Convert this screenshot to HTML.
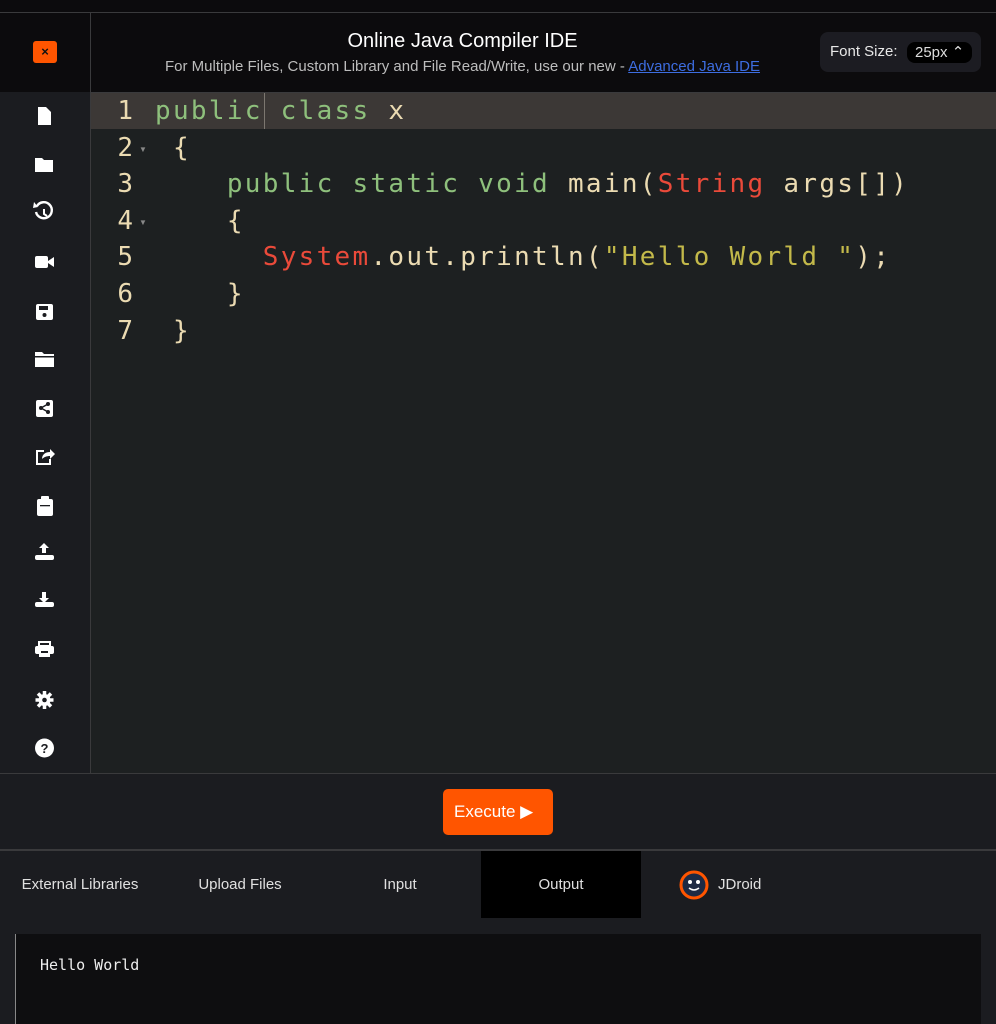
<!DOCTYPE html>
<html><head><meta charset="utf-8"><style>
*{margin:0;padding:0;box-sizing:border-box}
body{width:996px;height:1024px;background:#1b1c20;overflow:hidden;font-family:"Liberation Sans",sans-serif;position:relative}
.top{position:absolute;left:0;top:0;width:996px;height:13px;background:#0c0b0d;border-bottom:1px solid #3a3a3c}
.hdr{position:absolute;left:0;top:13px;width:996px;height:79px;background:#0c0b0d}
.side{position:absolute;left:0;top:13px;width:91px;height:760px;border-right:1px solid #3a3a3c}
.sideb{position:absolute;left:0;top:92px;width:90px;height:681px;background:#1b1c20}
.xbtn{position:absolute;left:33px;top:41px;width:24px;height:22px;background:#ff5500;border-radius:3px;color:#111;font-size:13px;font-weight:bold;text-align:center;line-height:22px}
.title{position:absolute;left:91px;width:743px;top:30px;text-align:center;color:#fff;font-size:20px}
.sub{position:absolute;left:91px;width:743px;top:58px;text-align:center;color:#bdbdbd;font-size:15px}
.sub a{color:#3d6de0;text-decoration:underline}
.fs{position:absolute;left:820px;top:32px;width:161px;height:40px;background:#1c1c22;border-radius:8px;color:#e8e8e8;font-size:15px}
.fs span{position:absolute;left:10px;top:11px}
.fs b{position:absolute;left:87px;top:10px;width:65px;height:21px;background:#000;border-radius:8px;font-weight:normal;color:#ddd;font-size:15px;padding-left:8px;line-height:21px}
.ed{position:absolute;left:91px;top:92px;width:905px;height:681px;background:#1d2021;border-top:1px solid #3a3a3c}
.hl{position:absolute;left:0;top:0;width:905px;height:36px;background:#3c3836}
.code{position:absolute;left:0;top:0;font-family:"DejaVu Sans Mono",monospace;font-size:26px;letter-spacing:2.3px;line-height:36.6px;color:#ebdbb2;white-space:pre}
.ln{display:inline-block;width:64px;text-align:right;padding-right:22px;color:#ebdbb2;letter-spacing:0}
.k{color:#8ec07c}.r{color:#ea4a3a}.s{color:#c3b94a}
.bar{position:absolute;left:0;top:773px;width:996px;height:78px;background:#1b1c20;border-top:1px solid #3a3a3c;border-bottom:2px solid #3a3a3c}
.exe{position:absolute;left:443px;top:789px;width:110px;height:46px;background:#ff5500;border-radius:5px;color:#fff;font-size:17px;line-height:46px;padding-left:11px}
.tab{position:absolute;top:851px;height:67px;width:160px;text-align:center;color:#e0e0e0;font-size:15px;line-height:67px}
.out{position:absolute;left:15px;top:934px;width:966px;height:90px;background:#0e0e10;color:#eee;font-family:"DejaVu Sans Mono",monospace;font-size:15px;padding:22px 0 0 24px;border-left:1px solid #888}
</style></head><body>
<div class="top"></div>
<div class="hdr"></div>
<div class="sideb"></div>
<div class="side"></div>
<div class="xbtn">×</div>
<div class="title">Online Java Compiler IDE</div>
<div class="sub">For Multiple Files, Custom Library and File Read/Write, use our new - <a>Advanced Java IDE</a></div>
<div class="fs"><span>Font Size:</span><b>25px ⌃</b></div>
<svg width="90" height="681" style="position:absolute;left:0;top:92px" fill="#fff">
<path d="M38 15h8l5 5v13h-13z"/>
<path d="M35 66h7l2 2h9v12h-18z"/>
<path d="M37 114a8 8 0 1 1 -1 6" fill="none" stroke="#fff" stroke-width="2.4"/><path d="M34 110l4 5-5 1z"/><path d="M44 117v5l3 2" fill="none" stroke="#fff" stroke-width="2"/>
<rect x="35" y="164" width="13" height="12" rx="2"/><path d="M48 169l6-4v10l-6-4z"/>
<rect x="36" y="212" width="17" height="16" rx="2"/><rect x="39" y="214" width="9" height="4" fill="#1b1c20"/><circle cx="44.5" cy="223" r="2" fill="#1b1c20"/>
<path d="M35 260h7l2 2h10v13h-19z"/><rect x="35" y="264" width="19" height="1.5" fill="#1b1c20"/>
<rect x="36" y="308" width="17" height="17" rx="2"/><g fill="#1b1c20"><circle cx="41" cy="316" r="2"/><circle cx="48" cy="312" r="2"/><circle cx="48" cy="320" r="2"/></g><path d="M41 316l7-4M41 316l7 4" stroke="#1b1c20" stroke-width="1.4"/>
<path d="M36 358h8v2h-6v11h11v-4h2v6h-15z"/><path d="M42 367c0-5 4-7 8-7v-3l5 5-5 5v-3c-3 0-6 1-8 3z"/>
<rect x="37" y="407" width="16" height="17" rx="2"/><rect x="41" y="404" width="8" height="5" rx="1"/><rect x="40" y="413" width="10" height="1.3" fill="#1b1c20"/>
<path d="M44 451l-5 5h3v5h4v-5h3z"/><rect x="35" y="463" width="19" height="5" rx="2"/>
<path d="M42 500h4v6h3l-5 5-5-5h3z"/><rect x="35" y="510" width="19" height="5" rx="2"/>
<rect x="39" y="550" width="11" height="4" fill="none" stroke="#fff" stroke-width="2"/><rect x="35" y="554" width="19" height="8" rx="2"/><rect x="39" y="559" width="11" height="6"/><rect x="41" y="559" width="7" height="2" fill="#1b1c20"/>
<circle cx="44.5" cy="608" r="6"/><g stroke="#fff" stroke-width="3.5"><path d="M44.5 599v18M35.5 608h18M38 601.5l13 13M51 601.5l-13 13"/></g><circle cx="44.5" cy="608" r="2.3" fill="#1b1c20"/>
<circle cx="44.5" cy="656" r="9.5"/><text x="44.5" y="661" font-size="13" font-weight="bold" text-anchor="middle" fill="#1b1c20" font-family="Liberation Sans">?</text>
</svg>
<div class="ed"><div class="hl"></div><div style="position:absolute;left:173px;top:0;width:1px;height:36px;background:#7c7770"></div>
<div class="code"><span class="ln">1</span><span class="k">public class</span> x
<span class="ln">2</span> {
<span class="ln">3</span>    <span class="k">public static void</span> main(<span class="r">String</span> args[])
<span class="ln">4</span>    {
<span class="ln">5</span>      <span class="r">System</span>.out.println(<span class="s">"Hello World "</span>);
<span class="ln">6</span>    }
<span class="ln">7</span> }</div>
<div style="position:absolute;left:48px;top:52px;color:#888;font-size:8px">▼</div>
<div style="position:absolute;left:48px;top:125px;color:#888;font-size:8px">▼</div>
</div>
<div class="bar"></div>
<div class="exe">Execute ▶</div>
<div class="tab" style="left:0">External Libraries</div>
<div class="tab" style="left:160px">Upload Files</div>
<div class="tab" style="left:320px">Input</div>
<div class="tab" style="left:481px;background:#000">Output</div>
<div class="tab" style="left:680px;width:100px;text-align:left;padding-left:38px">JDroid</div>
<svg style="position:absolute;left:679px;top:870px" width="30" height="30"><circle cx="15" cy="15" r="13" fill="#1e2a44" stroke="#ff5500" stroke-width="3"/><circle cx="11" cy="12" r="2" fill="#fff"/><circle cx="19" cy="12" r="2" fill="#fff"/><path d="M10 18q5 4 10 0" stroke="#fff" stroke-width="1.5" fill="none"/></svg>
<div class="out">Hello World</div>
</body></html>
